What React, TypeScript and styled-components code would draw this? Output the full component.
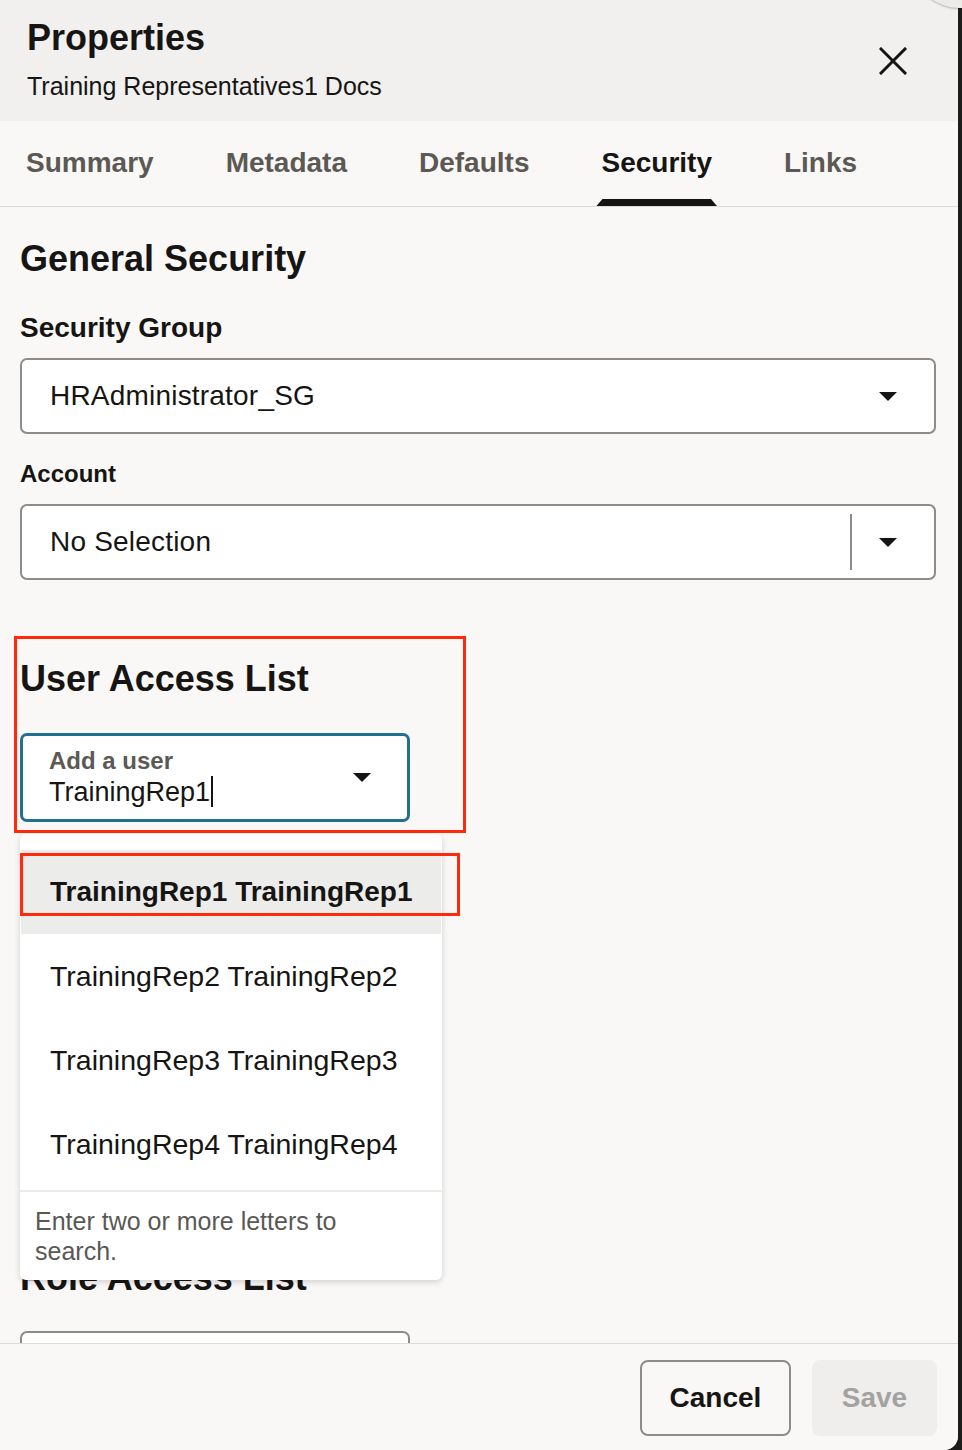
import React from "react";
import styled, { createGlobalStyle } from "styled-components";

const GlobalStyle = createGlobalStyle`
   html, body {
      margin: 0;
      padding: 0;
      background: #1c1c1c;
   }
   * {
      box-sizing: border-box;
   }
   body {
      font-family: "Liberation Sans", Arial, sans-serif;
      color: #161513;
   }
`;

const tabs = ["Summary", "Metadata", "Defaults", "Security", "Links"];
const users = ["TrainingRep1", "TrainingRep2", "TrainingRep3", "TrainingRep4"];

const Caret = () => (
   <svg width="18" height="9" viewBox="0 0 18 9">
      <path d="M0 0 L18 0 L9 9 Z" fill="#161513" />
   </svg>
);

const CloseIcon = () => (
   <svg width="28" height="28" viewBox="0 0 28 28">
      <path d="M2 2 L26 26 M26 2 L2 26" stroke="#161513" strokeWidth="3" strokeLinecap="square" />
   </svg>
);

const App = (): JSX.Element => {
   return (
      <>
         <GlobalStyle />
         <Page>
            <Panel>
               <Header>
                  <TitleBlock>
                     <Title>Properties</Title>
                     <Subtitle>Training Representatives1 Docs</Subtitle>
                  </TitleBlock>
                  <CloseButton aria-label="Close">
                     <CloseIcon />
                  </CloseButton>
               </Header>

               <TabBar>
                  {tabs.map((t) => (
                     <Tab key={t} $active={t === "Security"}>
                        {t}
                     </Tab>
                  ))}
               </TabBar>

               <Content>
                  <SectionTitle>General Security</SectionTitle>
                  <FieldLabel $size={28}>Security Group</FieldLabel>
                  <SelectBox>
                     <SelectValue>HRAdministrator_SG</SelectValue>
                     <CaretArea>
                        <Caret />
                     </CaretArea>
                  </SelectBox>

                  <FieldLabel $size={24} $gap={25}>
                     Account
                  </FieldLabel>
                  <SelectBox>
                     <SelectValue>No Selection</SelectValue>
                     <CaretArea $divided>
                        <Caret />
                     </CaretArea>
                  </SelectBox>

                  <Highlight>
                     <SectionTitle $top={0}>User Access List</SectionTitle>
                     <Combo>
                        <ComboInput>
                           <ComboText>
                              <ComboLabel>Add a user</ComboLabel>
                              <ComboValue>
                                 TrainingRep1
                                 <TextCursor />
                              </ComboValue>
                           </ComboText>
                           <Caret />
                        </ComboInput>

                        <Dropdown>
                           <ItemMark />
                           {users.map((u, i) => (
                              <Option key={u} $active={i === 0}>
                                 {u} {u}
                              </Option>
                           ))}
                           <DropdownHint>Enter two or more letters to search.</DropdownHint>
                        </Dropdown>
                     </Combo>
                  </Highlight>

                  <SectionTitle $top={425}>Role Access List</SectionTitle>
                  <EmptyInput />
               </Content>

               <Footer>
                  <CancelButton>Cancel</CancelButton>
                  <SaveButton disabled>Save</SaveButton>
               </Footer>
            </Panel>
            <CornerBubble />
         </Page>
      </>
   );
};

export default App;

const Page = styled.div`
   position: relative;
   width: 962px;
   height: 1450px;
   overflow: hidden;
   background: #1c1c1c;
`;

const Panel = styled.div`
   width: 958px;
   height: 1450px;
   display: flex;
   flex-direction: column;
   background: #f9f8f6;
   border-radius: 0 0 14px 0;
   overflow: hidden;
`;

const CornerBubble = styled.div`
   position: absolute;
   left: 912px;
   top: -84px;
   width: 96px;
   height: 92px;
   border-radius: 50%;
   background: #ebebea;
   box-shadow: 0 1px 2px rgba(0, 0, 0, 0.25);
`;

const Header = styled.div`
   height: 121px;
   flex-shrink: 0;
   display: flex;
   align-items: center;
   justify-content: space-between;
   padding: 0 45px 0 27px;
   background: #f1f0ee;
`;

const TitleBlock = styled.div`
   display: flex;
   flex-direction: column;
   padding-bottom: 4px;
`;

const Title = styled.h1`
   margin: 0;
   font-size: 36px;
   line-height: 44px;
   font-weight: 700;
`;

const Subtitle = styled.div`
   margin-top: 11px;
   font-size: 25px;
   line-height: 30px;
`;

const CloseButton = styled.button`
   width: 40px;
   height: 40px;
   display: flex;
   align-items: center;
   justify-content: center;
   padding: 0;
   border: none;
   background: transparent;
   cursor: pointer;
`;

const TabBar = styled.div`
   height: 86px;
   flex-shrink: 0;
   display: flex;
   gap: 62px;
   padding-left: 21px;
   border-bottom: 1px solid #dedcd9;
   background: #f9f8f6;
`;

const Tab = styled.div<{ $active?: boolean }>`
   position: relative;
   display: flex;
   align-items: center;
   padding: 0 5px 2px;
   font-size: 28px;
   font-weight: 700;
   color: ${(p) => (p.$active ? "#161513" : "#5c5955")};

   &::after {
      content: "";
      display: ${(p) => (p.$active ? "block" : "none")};
      position: absolute;
      left: 0;
      right: 0;
      bottom: 0;
      height: 7px;
      background: #161513;
      clip-path: polygon(6px 0, calc(100% - 6px) 0, 100% 100%, 0 100%);
   }
`;

const Content = styled.div`
   flex: 1;
   min-height: 0;
   overflow: hidden;
   padding: 32px 22px 0 20px;
   display: flex;
   flex-direction: column;

   & > * {
      flex-shrink: 0;
   }
`;

const SectionTitle = styled.h2<{ $top?: number }>`
   margin: ${(p) => p.$top ?? 0}px 0 0;
   font-size: 36px;
   line-height: 40px;
   font-weight: 700;
`;

const FieldLabel = styled.div<{ $size: number; $gap?: number }>`
   margin-top: ${(p) => p.$gap ?? 34}px;
   margin-bottom: 15px;
   font-size: ${(p) => p.$size}px;
   line-height: 30px;
   font-weight: 700;
`;

const SelectBox = styled.div`
   height: 76px;
   display: flex;
   align-items: center;
   background: #ffffff;
   border: 2px solid #8d8c8a;
   border-radius: 7px;
   padding-left: 28px;
`;

const SelectValue = styled.div`
   flex: 1;
   font-size: 28px;
   letter-spacing: 0.2px;
`;

const CaretArea = styled.div<{ $divided?: boolean }>`
   width: 84px;
   align-self: stretch;
   display: flex;
   align-items: center;
   justify-content: center;
   padding-right: 10px;
   margin: 8px 0;
   border-left: ${(p) => (p.$divided ? "2px solid #8d8c8a" : "2px solid transparent")};
`;

const Highlight = styled.div`
   margin: 56px 0 0 -6px;
   width: 452px;
   padding: 20px 0 8px 3px;
   border: 3px solid #ff2a0d;
`;

const Combo = styled.div`
   position: relative;
   margin-top: 34px;
   width: 390px;
`;

const ComboInput = styled.div`
   height: 89px;
   display: flex;
   align-items: center;
   padding: 0 36px 0 26px;
   background: #ffffff;
   border: 3px solid #226f8f;
   border-radius: 7px;
`;

const ComboText = styled.div`
   flex: 1;
   display: flex;
   flex-direction: column;
   padding-top: 2px;
`;

const ComboLabel = styled.div`
   font-size: 24px;
   line-height: 26px;
   font-weight: 700;
   color: #5c5955;
`;

const ComboValue = styled.div`
   display: flex;
   align-items: center;
   font-size: 27px;
   line-height: 36px;
`;

const TextCursor = styled.span`
   display: inline-block;
   width: 2px;
   height: 31px;
   margin-left: 1px;
   background: #161513;
`;

const Dropdown = styled.div`
   position: absolute;
   z-index: 10;
   top: calc(100% + 12px);
   left: 0;
   width: 422px;
   padding-top: 16px;
   background: #ffffff;
   border-radius: 6px;
   box-shadow: 0 2px 6px rgba(0, 0, 0, 0.16);
`;

const ItemMark = styled.div`
   position: absolute;
   z-index: 2;
   left: 0;
   top: 19px;
   width: 440px;
   height: 63px;
   border: 3px solid #ff2a0d;
`;

const Option = styled.div<{ $active?: boolean }>`
   height: 84px;
   display: flex;
   align-items: center;
   padding-left: 29px;
   font-size: ${(p) => (p.$active ? 28 : 28.5)}px;
   font-weight: ${(p) => (p.$active ? 700 : 400)};
   background: ${(p) => (p.$active ? "#ececeb" : "transparent")};
   margin: 0 1px;
`;

const DropdownHint = styled.div`
   margin-top: 4px;
   border-top: 2px solid #ebebea;
   padding: 14px 60px 14px 15px;
   font-size: 25px;
   line-height: 30px;
   color: #5a5855;
`;

const EmptyInput = styled.div`
   margin-top: 33px;
   width: 390px;
   height: 88px;
   background: #ffffff;
   border: 2px solid #8d8c8a;
   border-radius: 7px;
`;

const Footer = styled.div`
   height: 107px;
   flex-shrink: 0;
   display: flex;
   justify-content: flex-end;
   align-items: flex-start;
   gap: 21px;
   padding: 16px 21px 0 0;
   border-top: 1px solid #dedcd9;
   background: #f9f8f6;
`;

const BaseButton = styled.button`
   height: 76px;
   border-radius: 8px;
   font-family: "Liberation Sans", Arial, sans-serif;
   font-size: 28px;
   font-weight: 700;
`;

const CancelButton = styled(BaseButton)`
   width: 151px;
   border: 2px solid #8d8c8a;
   background: #f9f8f6;
   color: #161513;
`;

const SaveButton = styled(BaseButton)`
   width: 125px;
   border: none;
   background: #efeeec;
   color: #a3a2a0;
`;
